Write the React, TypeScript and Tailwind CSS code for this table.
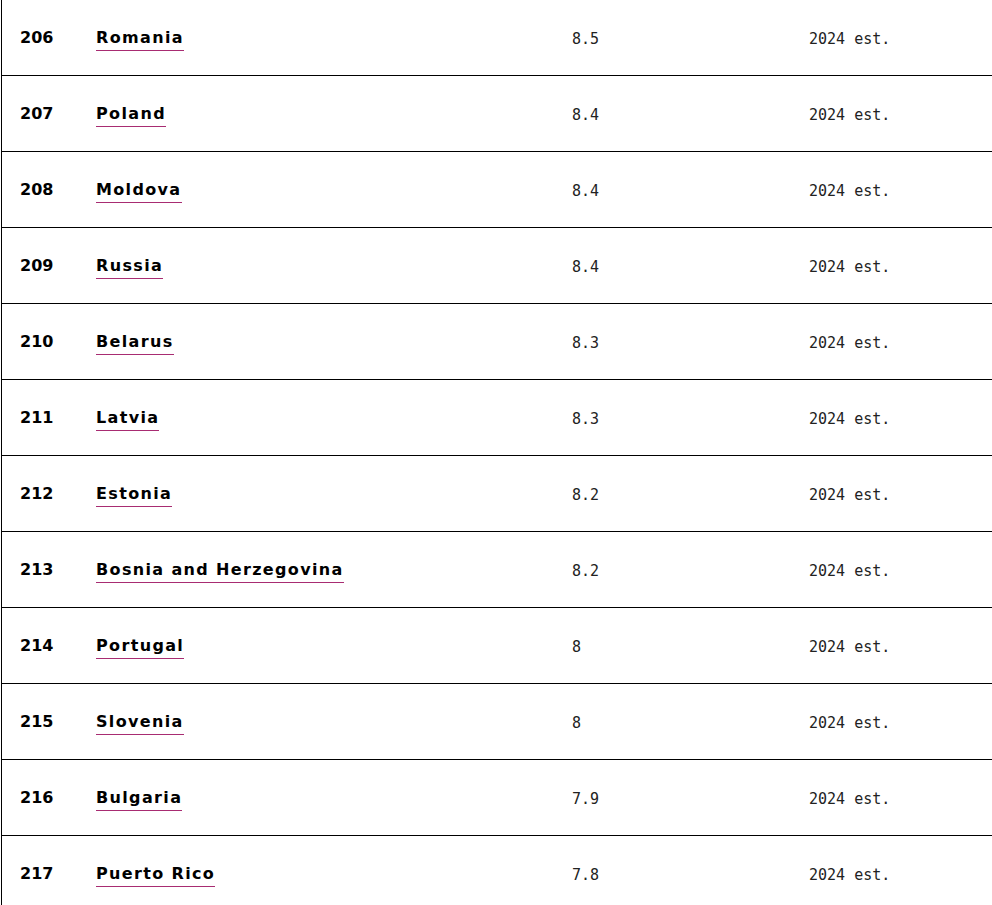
import React from "react";

type Row = { rank: number; name: string; value: string; year: string };

const rows: Row[] = [
  { rank: 206, name: "Romania", value: "8.5", year: "2024 est." },
  { rank: 207, name: "Poland", value: "8.4", year: "2024 est." },
  { rank: 208, name: "Moldova", value: "8.4", year: "2024 est." },
  { rank: 209, name: "Russia", value: "8.4", year: "2024 est." },
  { rank: 210, name: "Belarus", value: "8.3", year: "2024 est." },
  { rank: 211, name: "Latvia", value: "8.3", year: "2024 est." },
  { rank: 212, name: "Estonia", value: "8.2", year: "2024 est." },
  { rank: 213, name: "Bosnia and Herzegovina", value: "8.2", year: "2024 est." },
  { rank: 214, name: "Portugal", value: "8", year: "2024 est." },
  { rank: 215, name: "Slovenia", value: "8", year: "2024 est." },
  { rank: 216, name: "Bulgaria", value: "7.9", year: "2024 est." },
  { rank: 217, name: "Puerto Rico", value: "7.8", year: "2024 est." },
];

export default function App() {
  return (
    <div className="h-[905px] overflow-hidden bg-white pl-px">
      <div className="border-l border-black">
        {rows.map((row) => (
          <div
            key={row.rank}
            className="flex h-[76px] items-center border-b border-black"
          >
            <div className="w-[94px] shrink-0 pl-[18px] font-['DejaVu_Sans',sans-serif] text-[16px] font-bold text-black">
              {row.rank}
            </div>
            <div className="w-[476px] shrink-0">
              <a
                href="#"
                className="inline-block border-b border-[#a82c72] pb-[2px] font-['DejaVu_Sans',sans-serif] text-[16px] font-bold leading-[20px] tracking-[1.35px] text-black"
              >
                {row.name}
              </a>
            </div>
            <div className="w-[237px] shrink-0 pt-[3px] font-['DejaVu_Sans_Mono',monospace] text-[15px] text-[#222]">
              {row.value}
            </div>
            <div className="flex-1 pt-[3px] font-['DejaVu_Sans_Mono',monospace] text-[15px] text-[#222]">
              {row.year}
            </div>
          </div>
        ))}
      </div>
    </div>
  );
}
